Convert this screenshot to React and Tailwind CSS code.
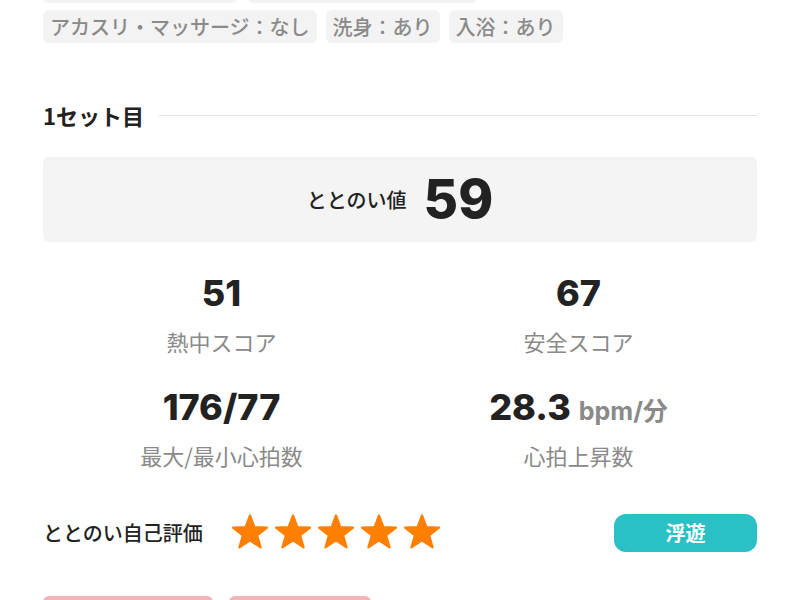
import React from "react"

const jp = { fontFamily: '"Noto Sans CJK JP", "Noto Sans", sans-serif' }
const num = { fontFamily: 'Inter, "Noto Sans CJK JP", sans-serif' }

const topChips = ["水風呂：16℃", "サウナ室：ドライ 90℃"]
const chips = ["アカスリ・マッサージ：なし", "洗身：あり", "入浴：あり"]

const stats = [
  { value: "51", label: "熱中スコア" },
  { value: "67", label: "安全スコア" },
  { value: "176/77", label: "最大/最小心拍数" },
  { value: "28.3", unit: "bpm/分", label: "心拍上昇数" },
]

function Star() {
  return (
    <svg width="40" height="40" viewBox="0 0 40 40">
      <polygon
        points="20,2.5 24.4,14.2 37,14.6 27.1,22.4 30.6,34.4 20,27.4 9.4,34.4 12.9,22.4 3,14.6 15.6,14.2"
        fill="#ff7f00"
        stroke="#ff7f00"
        strokeWidth="2.2"
        strokeLinejoin="round"
      />
    </svg>
  )
}

export default function App() {
  return (
    <div className="h-[600px] w-[800px] overflow-hidden bg-white" style={jp}>
      <div className="-mt-[30px] px-[43px]">
        {/* 条件タグ */}
        <div className="flex gap-[11px]">
          <span className="flex h-[33px] w-[194px] items-center rounded-md bg-[#f3f3f3] px-[7px] text-[20px] text-[#8a8a8a]">
            {topChips[0]}
          </span>
          <span className="flex h-[33px] w-[229px] items-center rounded-md bg-[#f3f3f3] px-[7px] text-[20px] text-[#8a8a8a]">
            {topChips[1]}
          </span>
        </div>
        <div className="mt-[7px] flex gap-[9px]">
          {chips.map((c) => (
            <span
              key={c}
              className="flex h-[33px] items-center rounded-md bg-[#f3f3f3] px-[7px] text-[20px] font-medium leading-none text-[#8a8a8a]"
            >
              {c}
            </span>
          ))}
        </div>

        {/* セット見出し */}
        <div className="mt-[58px] flex h-[28px] items-center gap-[15px]">
          <span className="text-[22px] font-bold text-[#222]">1セット目</span>
          <div className="h-px flex-1 bg-[#e3e3e3]" />
        </div>

        {/* ととのい値 */}
        <div className="mt-[28px] flex h-[85px] items-center justify-center gap-[17px] rounded-md bg-[#f4f4f4]">
          <span className="text-[20px] font-medium text-[#222]">ととのい値</span>
          <span className="text-[53px] font-extrabold leading-none text-[#222]" style={num}>
            59
          </span>
        </div>

        {/* スコア */}
        <div className="mt-[31px] grid grid-cols-2 gap-y-[32px]">
          {stats.map((s) => (
            <div key={s.label} className="flex flex-col items-center">
              <div className="flex h-[40px] items-baseline gap-[8px]">
                <span className="text-[36px] font-extrabold leading-[40px] text-[#222]" style={num}>
                  {s.value}
                </span>
                {s.unit && (
                  <span className="text-[25px] font-bold text-[#8a8a8a]" style={num}>
                    {s.unit}
                  </span>
                )}
              </div>
              <span className="mt-[14px] text-[22px] leading-[28px] text-[#8a8a8a]">{s.label}</span>
            </div>
          ))}
        </div>

        {/* 自己評価 */}
        <div className="mt-[45px] flex h-[38px] items-center">
          <span className="text-[20px] font-medium text-[#222]">ととのい自己評価</span>
          <div className="ml-[27px] flex gap-[3px]">
            {[0, 1, 2, 3, 4].map((i) => (
              <Star key={i} />
            ))}
          </div>
          <button className="ml-auto flex h-[38px] w-[143px] items-center justify-center rounded-xl bg-[#2bbfc6] text-[20px] font-bold text-white">
            浮遊
          </button>
        </div>

        {/* タグ */}
        <div className="mt-[44px] flex gap-[16px]">
          <span className="flex h-[33px] w-[170px] items-center justify-center rounded-md bg-[#f2b5b7] text-[18px] text-white">
            ととのった
          </span>
          <span className="flex h-[33px] w-[142px] items-center justify-center rounded-md bg-[#f2b5b7] text-[18px] text-white">
            多幸感
          </span>
        </div>
      </div>
    </div>
  )
}
